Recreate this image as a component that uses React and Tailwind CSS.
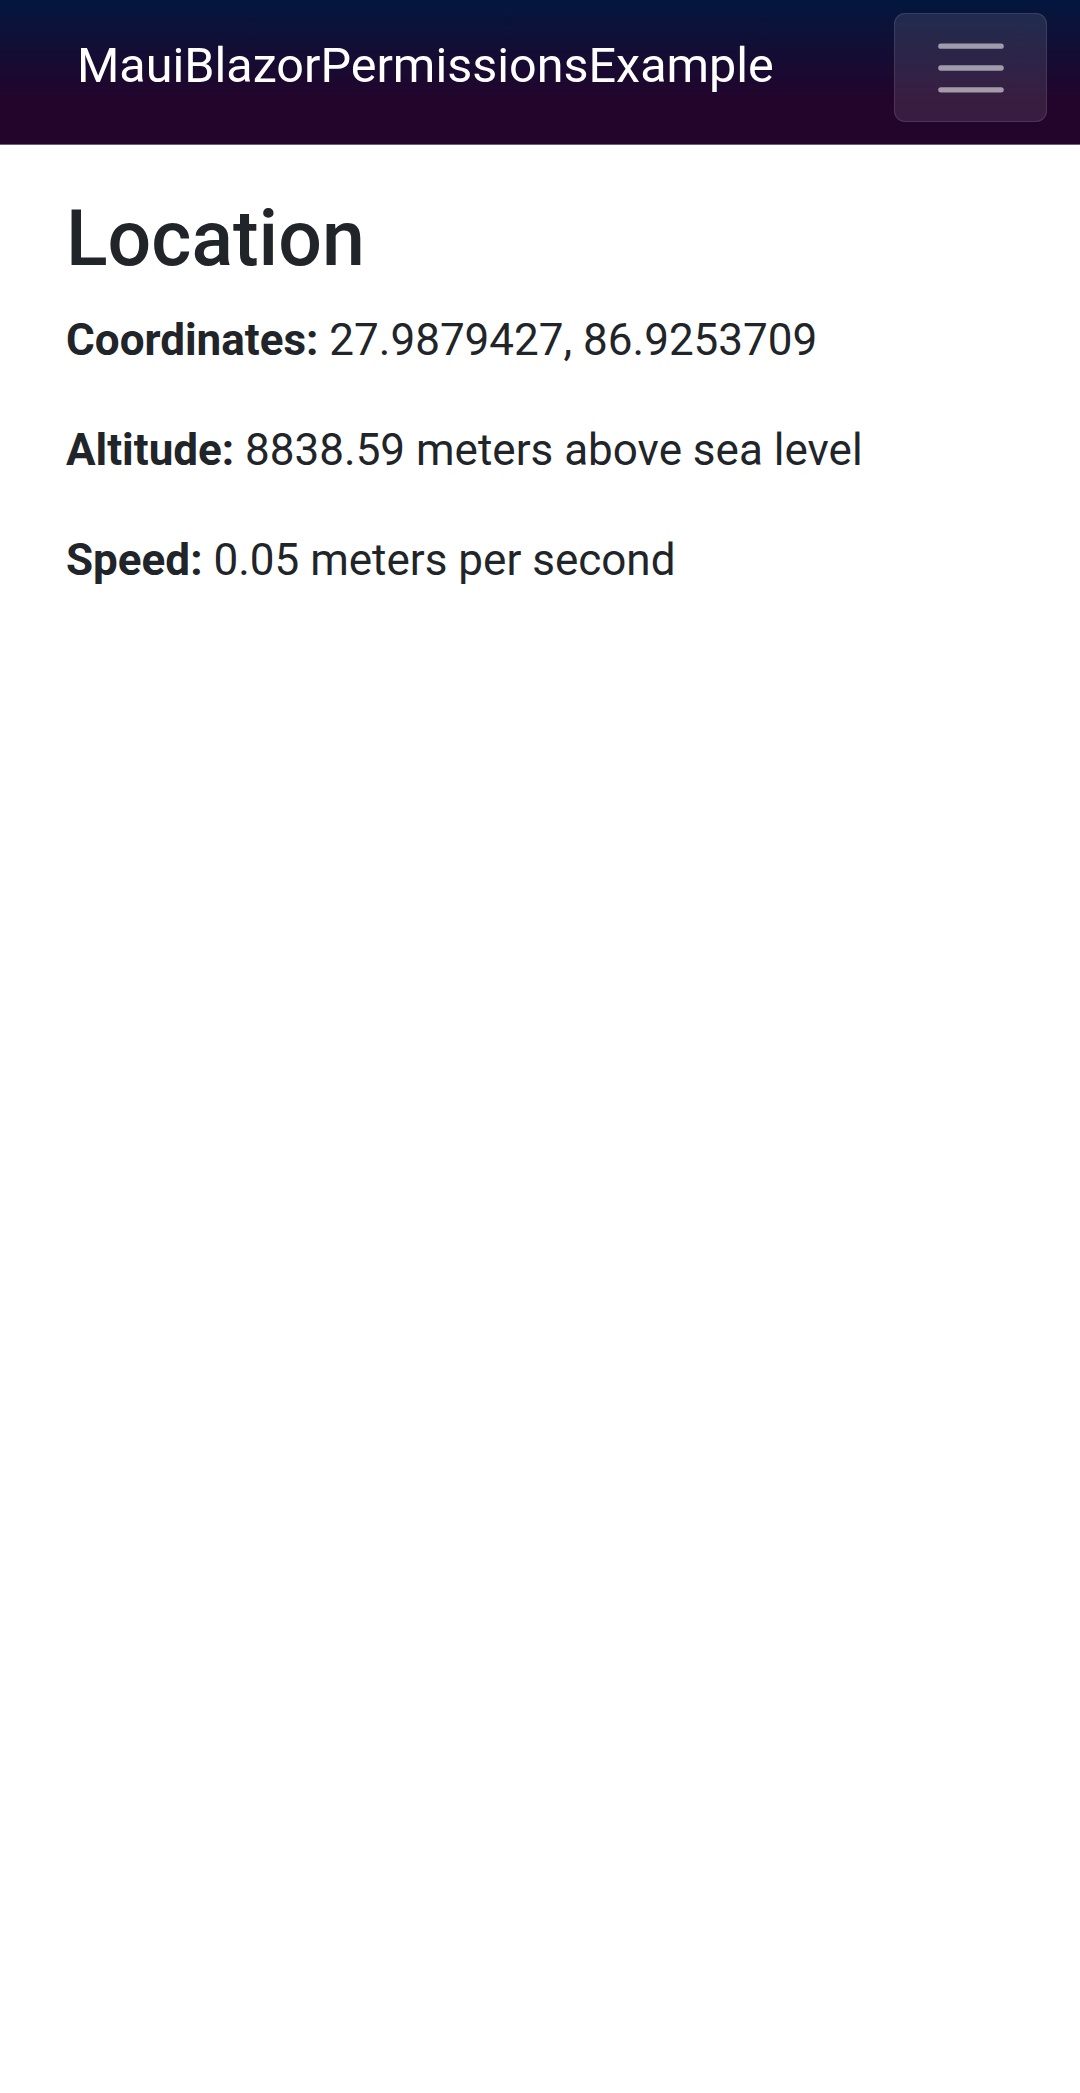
export default function App() {
  return (
    <div className="min-h-[2093px] bg-white font-['Roboto',sans-serif]">
      <header className="h-[145px] flex items-start justify-between bg-[linear-gradient(180deg,#03173e_0%,#23042b_70%)] border-b border-[#6f5d78]">
        <div className="pl-[77px] h-[144px] flex items-center text-[48.5px] text-white leading-none pb-[12px]">
          MauiBlazorPermissionsExample
        </div>
        <button className="mt-[13px] mr-[33px] w-[153px] h-[109px] flex items-center justify-center rounded-[11px] bg-white/10 border border-white/10">
          <svg width="82" height="82" viewBox="0 0 30 30" fill="none">
            <path
              d="M4 7h22M4 15h22M4 23h22"
              stroke="rgba(255,255,255,0.55)"
              strokeWidth="2"
              strokeLinecap="round"
            />
          </svg>
        </button>
      </header>

      <main className="px-[66px] pt-[48px] text-[#212529]">
        <h1 className="text-[77px] leading-[1.2] font-medium mb-[22px]">Location</h1>
        <p className="text-[44px] leading-[1.5] mb-[44px]">
          <strong className="font-bold">Coordinates:</strong> 27.9879427, 86.9253709
        </p>
        <p className="text-[44px] leading-[1.5] mb-[44px]">
          <strong className="font-bold">Altitude:</strong> 8838.59 meters above sea level
        </p>
        <p className="text-[44px] leading-[1.5] mb-[44px]">
          <strong className="font-bold">Speed:</strong> 0.05 meters per second
        </p>
      </main>
    </div>
  );
}
